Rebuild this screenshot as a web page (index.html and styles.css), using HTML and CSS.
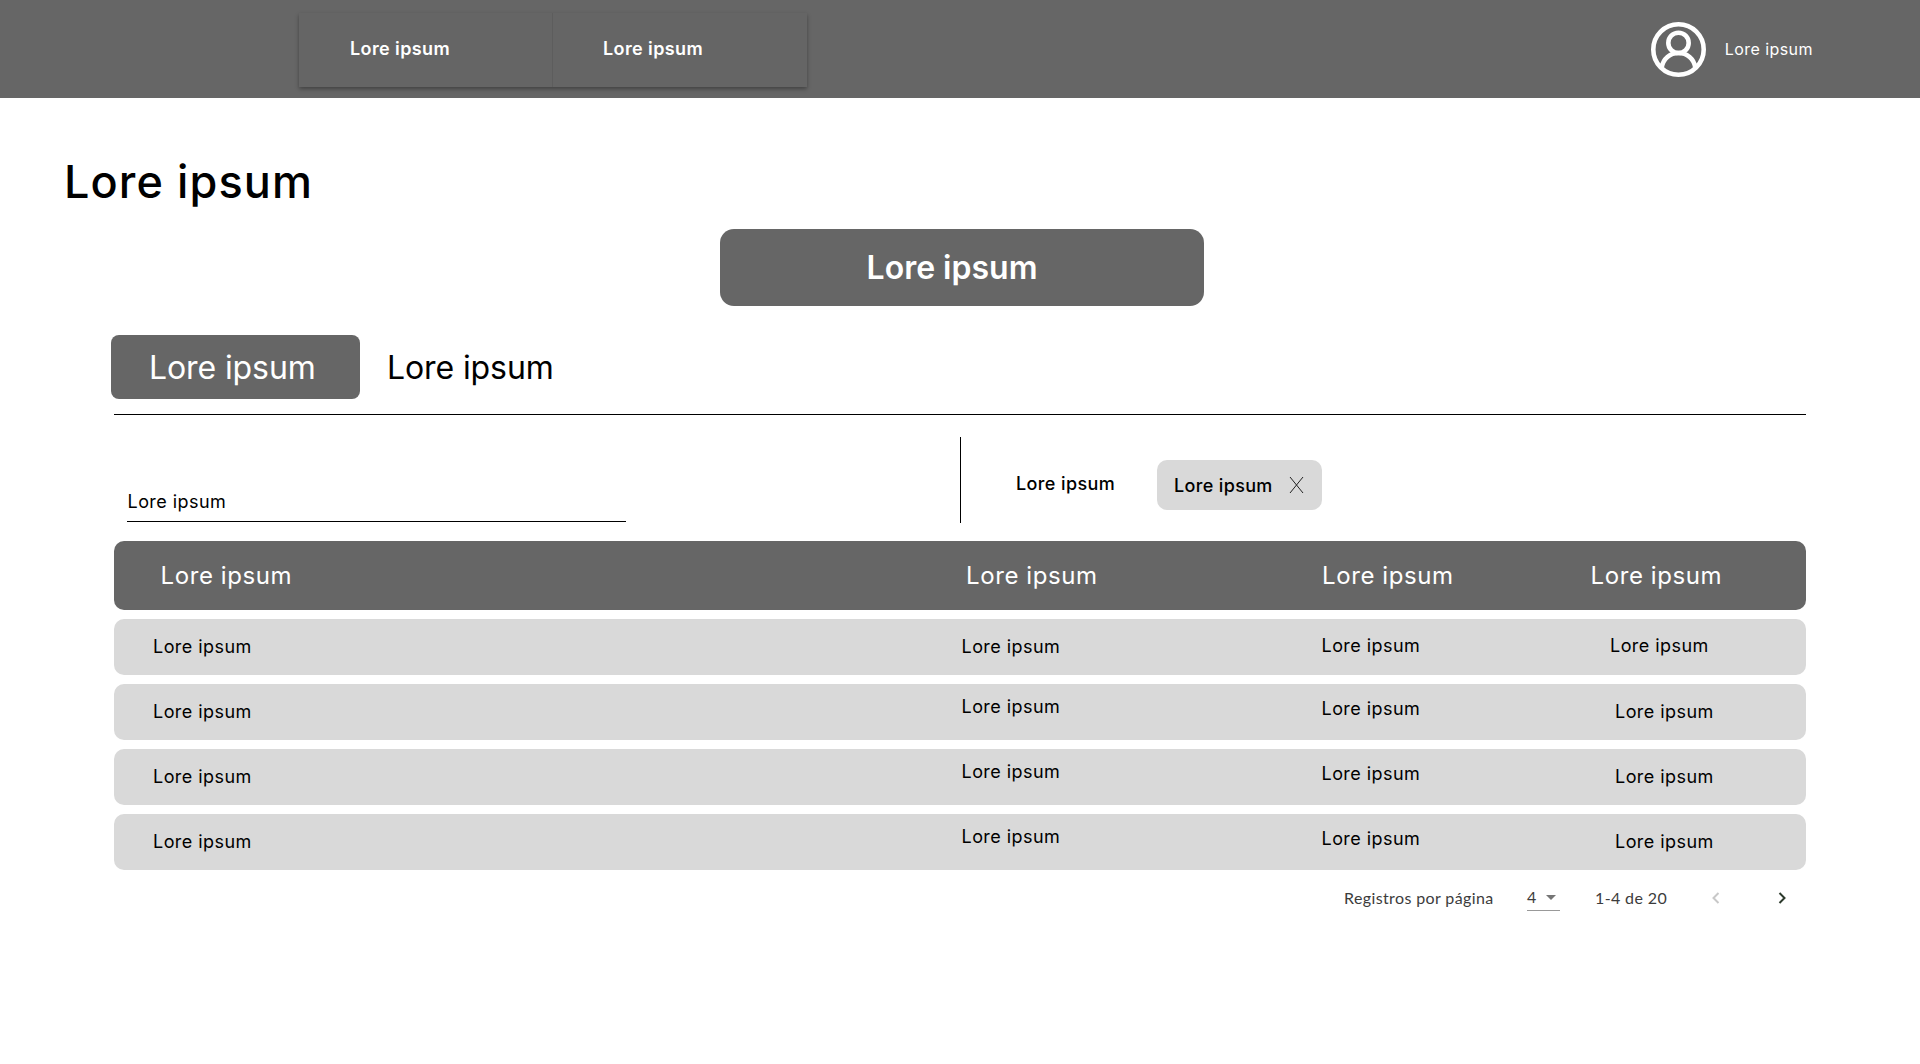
FILE: index.html
```html
<!DOCTYPE html>
<html lang="es">
<head>
<meta charset="utf-8">
<title>Lore ipsum</title>
<link rel="stylesheet" href="styles.css">
</head>
<body>
<header class="topbar">
  <nav class="navtabs">
    <a class="navtab">Lore ipsum</a>
    <a class="navtab">Lore ipsum</a>
  </nav>
  <div class="user">
    <svg class="user-icon" viewBox="0 0 54 54" fill="none" stroke="#fff" stroke-width="4.5">
      <circle cx="27" cy="27" r="24.75"/>
      <circle cx="27" cy="20.5" r="10"/>
      <path d="M10.5 44.5C12 36 18.5 30.5 27 30.5S42 36 43.5 44.5"/>
    </svg>
    <span class="user-name">Lore ipsum</span>
  </div>
</header>
<main>
  <h1 class="title">Lore ipsum</h1>
  <button class="primary">Lore ipsum</button>
  <div class="tabs">
    <span class="tab tab-active">Lore ipsum</span>
    <span class="tab">Lore ipsum</span>
  </div>
  <div class="content">
    <div class="filters">
      <div class="search"><span class="search-text">Lore ipsum</span></div>
      <div class="filter">
        <span class="filter-label">Lore ipsum</span>
        <span class="chip">Lore ipsum
          <svg class="chip-x" viewBox="0 0 15 18" fill="none" stroke="#222" stroke-width="1"><path d="M1 1 14 17M14 1 1 17"/></svg>
        </span>
      </div>
    </div>
    <div class="table">
      <div class="thead">
        <span>Lore ipsum</span><span>Lore ipsum</span><span>Lore ipsum</span><span>Lore ipsum</span>
      </div>
      <div class="row">
        <span>Lore ipsum</span><span>Lore ipsum</span><span class="up1">Lore ipsum</span><span class="up1">Lore ipsum</span>
      </div>
      <div class="row">
        <span>Lore ipsum</span><span class="up5">Lore ipsum</span><span class="up3">Lore ipsum</span><span class="in5">Lore ipsum</span>
      </div>
      <div class="row">
        <span>Lore ipsum</span><span class="up5">Lore ipsum</span><span class="up3">Lore ipsum</span><span class="in5">Lore ipsum</span>
      </div>
      <div class="row">
        <span>Lore ipsum</span><span class="up5">Lore ipsum</span><span class="up3">Lore ipsum</span><span class="in5">Lore ipsum</span>
      </div>
    </div>
    <div class="pager">
      <span class="pager-label">Registros por página</span>
      <span class="pager-select">4
        <svg class="caret" viewBox="0 0 10 5"><path d="M0 0h10L5 5z" fill="#757575"/></svg>
      </span>
      <span class="pager-range">1-4 de 20</span>
      <svg class="chev chev-prev" viewBox="0 0 8 12" fill="none" stroke="#c8c8c8" stroke-width="2"><path d="M6.5 1 1.5 6l5 5"/></svg>
      <svg class="chev chev-next" viewBox="0 0 8 12" fill="none" stroke="#2c3a2c" stroke-width="2"><path d="M1.5 1l5 5-5 5"/></svg>
    </div>
  </div>
</main>
</body>
</html>
```

FILE: styles.css
```css
* { box-sizing: border-box; }
html, body { margin: 0; padding: 0; background: #fff; }
body { font-family: "Inter", "Liberation Sans", sans-serif; color: #000; height: 1064px; overflow: hidden; }

.topbar { height: 98px; background: #666; display: flex; align-items: center; justify-content: space-between; padding: 0 107px 0 299px; }
.navtabs { display: flex; width: 508px; height: 74px; margin-top: 2px; background: #656565; box-shadow: 0 2px 4px rgba(0,0,0,.35); }
.navtab { flex: none; width: 253px; display: flex; align-items: center; padding: 0 0 3px 51px; color: #fff; font-size: 18px; font-weight: 600; letter-spacing: .4px; }
.navtab + .navtab { width: 255px; border-left: 1px solid #5d5d5d; padding-left: 50px; }
.user { display: flex; align-items: center; gap: 19px; }
.user-icon { width: 55px; height: 55px; display: block; }
.user-name { color: #fff; font-size: 16px; letter-spacing: .45px; }

.title { margin: 54px 0 0 64px; height: 60px; line-height: 60px; font-size: 45px; font-weight: 500; letter-spacing: 1.1px; }
.primary { display: block; margin: 17px 0 0 720px; width: 484px; height: 77px; border: 0; border-radius: 14px; background: #666; color: #fff; font: 600 32px "Inter", sans-serif; padding: 0 20px 0 0; }
.tabs { display: flex; align-items: center; height: 64px; margin: 29px 0 0 111px; gap: 27px; }
.tab { font-size: 32px; line-height: 64px; padding-top: 1px; letter-spacing: -.1px; }
.tab-active { width: 249px; height: 64px; padding-left: 38px; background: #666; color: #fff; border-radius: 8px; }

.content { width: 1692px; margin: 15px 0 0 114px; border-top: 1px solid #000; }
.filters { display: flex; height: 86px; margin-top: 22px; }
.search { width: 846px; padding: 0 0 1px 13px; display: flex; align-items: flex-end; }
.search-text { display: block; width: 499px; height: 39px; padding: 5px 0 0 .5px; border-bottom: 1px solid #000; font-size: 18px; letter-spacing: .45px; line-height: 27px; }
.filter { flex: 1; display: flex; align-items: center; border-left: 1px solid #000; padding: 6px 0 0 55px; }
.filter-label { width: 141px; font-size: 18px; font-weight: 500; letter-spacing: .4px; }
.chip { width: 165px; height: 50px; margin-top: 4px; padding: 0 18px 0 17px; display: flex; align-items: center; justify-content: space-between; background: #d9d9d9; border-radius: 10px; font-size: 18px; font-weight: 500; letter-spacing: .35px; }
.chip-x { width: 15px; height: 18px; display: block; }

.table { margin-top: 18px; display: flex; flex-direction: column; gap: 9.5px; }
.thead, .row { display: grid; align-items: center; border-radius: 10px; }
.thead { height: 68.5px; grid-template-columns: 805.5px 356px 268.5px 1fr; padding-left: 46.5px; background: #666; color: #fff; font-size: 24px; letter-spacing: .6px; }
.row { height: 55.5px; grid-template-columns: 808.5px 360px 288.5px 1fr; padding-left: 39px; background: #d9d9d9; font-size: 18px; letter-spacing: .45px; }
.up1 { padding-bottom: 2px; }
.up3 { padding-bottom: 6px; }
.up5 { padding-bottom: 11px; }
.in5 { padding-left: 5px; }

.pager { display: flex; align-items: center; height: 56px; padding-left: 1230px; font-family: "Lato", sans-serif; font-size: 16px; letter-spacing: .38px; color: #3c3c3c; }
.pager-label { width: 183px; }
.pager-select { width: 33px; height: 26px; margin-right: 35px; padding-top: 1px; border-bottom: 1px solid #999; display: flex; align-items: flex-start; gap: 9px; line-height: 22px; margin-top: 1px; }
.caret { width: 10px; height: 5px; margin-top: 9px; display: block; }
.pager-range { width: 116px; }
.chev { width: 8px; height: 12px; display: block; }
.chev-prev { margin-left: 1px; }
.chev-next { margin-left: 58px; }
```
